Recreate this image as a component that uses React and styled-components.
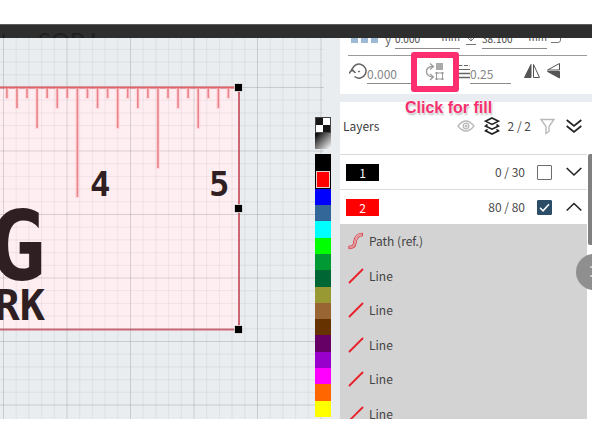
import React, { useState } from 'react'
import styled, { createGlobalStyle, css } from 'styled-components'

const GlobalStyle = createGlobalStyle`
  * {
    box-sizing: border-box;
  }

  body {
    background: #fff;
    color: #3c3c3c;
    font-family: 'Noto Sans CJK SC', 'Open Sans', sans-serif;
    font-size: 12px;
    line-height: 16px;
    margin: 0;
  }
`

const Page = styled.div`
  display: flex;
  flex-direction: column;
  height: 100vh;
  overflow: hidden;
  padding: 24px 0;
`

const TitleBar = styled.header`
  background: #2e2e2e;
  border-top: 1px solid #5c5f5e;
  flex: none;
  height: 14px;
  overflow: hidden;
  padding-top: 4px;
`

const Title = styled.h1`
  color: #1f1f1f;
  font-family: Lato, sans-serif;
  font-size: 24px;
  font-weight: 400;
  line-height: 24px;
  margin: 0;
`

const Workspace = styled.main`
  background: #e9edf0;
  display: grid;
  flex: 1;
  grid-template-columns: 1fr 16px 252px;
  margin-bottom: 1px;
  min-height: 0;
`

const Canvas = styled.div`
  min-width: 0;
  overflow: hidden;

  svg {
    display: block;
    height: 100%;
    width: 100%;
  }
`

const PaletteColumn = styled.div`
  display: flex;
  flex-direction: column;
  margin-right: 9px;
  margin-left: -9px;
  padding-top: 79px;
`

const Pattern = styled.button`
  background: ${p =>
    p.$checker
      ? 'conic-gradient(#fff 25%, #161616 0 50%, #fff 0 75%, #161616 0)'
      : 'linear-gradient(135deg, #111 10%, #fff)'};
  border: ${p => (p.$checker ? '1px solid #444' : 'none')};
  flex: none;
  height: 16px;
  padding: 0;
  width: 16px;
`

const Palette = styled.div`
  display: flex;
  flex: none;
  flex-direction: column;
  height: 263px;
  margin-top: 5px;
`

const Color = styled.button`
  background: ${p => p.$color};
  border: none;
  flex: 1;
  padding: 0;
  width: 16px;

  ${p =>
    p.$selected &&
    css`
      border: 1px solid #000;
      box-shadow: inset 0 0 0 1px #e8d0c8;
    `}
`

const Panel = styled.aside`
  background: #e9ecf0;
  display: flex;
  flex-direction: column;
  gap: 8px;
  min-height: 0;
  position: relative;
`

const Properties = styled.section`
  background: #fff;
  flex: none;
  padding-bottom: 10px;
`

const PositionRow = styled.div`
  align-items: flex-end;
  display: flex;
  height: 11px;
  overflow: hidden;
  padding-left: 11px;
`

const Anchors = styled.div`
  align-self: flex-start;
  display: flex;
  gap: 3px;
  margin-right: 7px;

  i {
    background: #9db9d3;
    height: 5px;
    width: 7px;
  }
`

const Measure = styled.label`
  align-items: flex-end;
  color: #6a6a6a;
  display: flex;
  height: 20px;
  margin-right: ${p => p.$after || 0}px;

  > svg {
    align-self: center;
    margin-right: 6px;
  }
`

const AxisName = styled.span`
  line-height: 20px;
  width: 10px;
`

const Field = styled.span`
  border-bottom: 1px solid #8b8b8b;
  display: flex;
  height: 20px;
  width: ${p => p.$width}px;
`

const Value = styled.input`
  background: none;
  border: none;
  color: ${p => (p.$dark ? '#4c4c4c' : '#858585')};
  flex: 1;
  font: inherit;
  font-size: ${p => (p.$dark ? 10 : 12)}px;
  line-height: 16px;
  min-width: 0;
  outline: none;
  padding: 0;
`

const Unit = styled.span`
  color: #4c4c4c;
  font-size: 10px;
  line-height: 16px;
`

const TransformRow = styled.div`
  align-items: flex-end;
  border-top: 1px solid #9a9a9a;
  display: flex;
  height: 29px;
  margin: 6px 5px 0 8px;
  padding-left: 1px;
`

const ToolIcon = styled.span`
  display: flex;
  height: 22px;
`

const ToolButton = styled.button`
  background: none;
  border: none;
  display: flex;
  height: 22px;
  margin-left: ${p => p.$before || 0}px;
  padding: 0;
`

const Callout = styled.div`
  display: flex;
  margin: 0 8px 0 13px;
  position: relative;

  &::after {
    border: 6px solid #fb2f70;
    border-radius: 3px;
    content: '';
    inset: -10px -14px -8px;
    pointer-events: none;
    position: absolute;
    z-index: 1;
  }
`

const CalloutLabel = styled.span`
  color: #f4306f;
  font-family: 'Liberation Sans', Arial, sans-serif;
  font-size: 16px;
  font-weight: 700;
  left: -20px;
  line-height: 18px;
  position: absolute;
  text-shadow: 0 0 2px #fff, 1px 2px 2px #b9b9b9;
  top: 37px;
  white-space: nowrap;
  z-index: 1;
`

const Layers = styled.section`
  background: #fff;
  display: flex;
  flex: 1;
  flex-direction: column;
  min-height: 0;
  overflow: hidden;
  padding-right: 5px;
`

const LayersHeader = styled.header`
  align-items: center;
  border-bottom: 1px solid #d9d9d9;
  display: flex;
  flex: none;
  height: 53px;
  padding: 0 5px 4px 3px;
`

const Heading = styled.h2`
  flex: 1;
  font-size: 12px;
  font-weight: 400;
  margin: 0;
`

const IconButton = styled.button`
  align-items: center;
  background: none;
  border: none;
  color: ${p => (p.$muted ? '#b9b9b9' : '#222')};
  display: flex;
  margin-left: ${p => p.$before || 0}px;
  padding: 0;
`

const Count = styled.span`
  color: #4a4a4a;
  margin-left: 8px;
`

const LayerRow = styled.div`
  align-items: center;
  border-bottom: ${p => (p.$open ? 'none' : '1px solid #dcdcdc')};
  display: flex;
  flex: none;
  height: ${p => (p.$open ? 34 : 35)}px;
  padding: 0 5px 0 6px;
`

const LayerName = styled.span`
  background: ${p => p.$color};
  color: #fff;
  height: 17px;
  line-height: 17px;
  margin-right: auto;
  text-align: center;
  width: 33px;
`

const Visible = styled.input`
  appearance: none;
  background: #fff;
  border: 1px solid #6c6c6c;
  border-radius: 1px;
  height: 15px;
  margin: 0 0 0 12px;
  width: 15px;

  &:checked {
    background: #2b4d68
      url("data:image/svg+xml,%3Csvg xmlns='http://www.w3.org/2000/svg' viewBox='0 0 13 13'%3E%3Cpath d='M2 6.8 5 9.8 11 3.2' fill='none' stroke='white' stroke-width='1.5'/%3E%3C/svg%3E");
    border-color: #2b4d68;
  }
`

const ItemList = styled.ul`
  background: #d3d3d3;
  color: #444;
  display: grid;
  flex: none;
  grid-template-rows: repeat(6, 1fr);
  height: 207px;
  list-style: none;
  margin: 0;
  padding: 0 0 0 8px;
`

const Item = styled.li`
  align-items: center;
  display: flex;
  gap: 5px;
`

const ScrollThumb = styled.div`
  background: #808080;
  border-radius: 2px 0 0 2px;
  height: 91px;
  position: absolute;
  right: 0;
  top: 116px;
  width: 4px;
`

const NextButton = styled.button`
  background: #8f8f8f;
  border: none;
  border-radius: 50%;
  color: #ddd;
  display: flex;
  height: 36px;
  padding: 11px 0 0 14px;
  position: absolute;
  right: -20px;
  top: 216px;
  width: 36px;
`

const colors = [
  '#000000',
  '#ff0000',
  '#0000ff',
  '#336699',
  '#00ffff',
  '#00ff00',
  '#009933',
  '#006633',
  '#999933',
  '#996633',
  '#663300',
  '#660066',
  '#9900cc',
  '#ff00ff',
  '#ff6600',
  '#ffff00',
]

const items = ['Path (ref.)', 'Line', 'Line', 'Line', 'Line', 'Line']

const range = n => Array.from({ length: n }, (_, i) => i)

const gridStroke = major => (major ? '#5c6670' : '#8090a0')
const gridOpacity = major => (major ? 0.24 : 0.13)

// sixteenths of an inch, counted from the right edge of the ruler
const tickLength = i => {
  if (i % 16 === 0) return 80
  if (i % 16 === 8) return 80
  if (i % 4 === 0) return 40
  return i % 2 === 0 ? 20 : 10
}

const Artboard = () => (
  <svg aria-label="Ruler drawing" role="img">
    <rect
      fill="#ffeef1"
      height="242"
      stroke="#cc6672"
      strokeWidth="2"
      width="258"
      x="-19"
      y="49.5"
    />
    {range(27).map(i => (
      <line
        key={`v${i}`}
        stroke={gridStroke(i % 5 === 0)}
        strokeOpacity={gridOpacity(i % 5 === 0)}
        x1={3.5 + i * 12.7}
        x2={3.5 + i * 12.7}
        y1="0"
        y2="382"
      />
    ))}
    {range(30).map(i => (
      <line
        key={`h${i}`}
        stroke={gridStroke(i % 5 === 4)}
        strokeOpacity={gridOpacity(i % 5 === 4)}
        x1="0"
        x2="332"
        y1={i * 12.7 - 1.3}
        y2={i * 12.7 - 1.3}
      />
    ))}
    <line stroke="#e0626a" strokeWidth="1.5" x2="238" y1="49.5" y2="49.5" />
    {range(23).map(i => {
      const x = 228.43 - i * 10.07
      // the whole-inch mark runs longer than the half-inch one
      const length = i === 15 ? 109 : tickLength(i + 1)
      return (
        <g key={i}>
          <line
            stroke="#ffc9cd"
            strokeOpacity="0.6"
            strokeWidth="4"
            x1={x}
            x2={x}
            y1="50"
            y2={51 + length}
          />
          <line
            stroke="#e9838b"
            strokeWidth="1.6"
            x1={x}
            x2={x}
            y1="50"
            y2={50 + length}
          />
        </g>
      )
    })}
    <g
      fill="#2f1f23"
      fontFamily="'DejaVu Sans Mono', monospace"
      fontWeight="700"
    >
      <text fontSize="34" x="90" y="158">
        4
      </text>
      <text fontSize="34" x="209" y="158">
        5
      </text>
      <text fontSize="96" textAnchor="end" x="46" y="242">
        G
      </text>
      <text fontSize="42" textAnchor="end" x="45" y="282">
        ORK
      </text>
    </g>
    <g stroke="#fff" strokeOpacity="0.7">
      <rect height="8" width="8" x="234.5" y="45.5" />
      <rect height="8" width="8" x="234.5" y="166.5" />
      <rect height="8" width="8" x="234.5" y="287.5" />
    </g>
  </svg>
)

const HeightIcon = () => (
  <svg fill="none" height="14" stroke="#777" viewBox="0 0 10 14" width="10">
    <path d="M5 0v9M2 6l3 3 3-3M0 12.500h10" />
  </svg>
)

const LockIcon = () => (
  <svg fill="none" height="11" stroke="#777" viewBox="0 0 10 11" width="10">
    <path d="M0 4.500h7q2.500 0 2.500-2.500v-2" />
  </svg>
)

const RotateIcon = () => (
  <svg fill="none" height="19" stroke="#626262" viewBox="0 0 18 19" width="18">
    <path d="M3 9.500a7 7 0 1 1 2.500 5" strokeWidth="1.500" />
    <path d="M0 11.500 3 7.500l3.500 3.500" strokeWidth="1.500" />
    <circle cx="10" cy="9.500" fill="#626262" r="0.600" />
  </svg>
)

const FillIcon = () => (
  <svg fill="none" height="19" stroke="#999" viewBox="0 0 20 19" width="20">
    <path d="M8 4.500H6.500Q1.500 5.500 1.500 9.500t5 5.500H8" strokeWidth="1.300" />
    <path d="M5 1.500 8.500 4.500 5 7.500M5 12l3.500 3L5 18" strokeWidth="1.200" />
    <rect fill="#aaa" height="7" stroke="none" width="7" x="11" y="1" />
    <rect height="6" width="6" x="11.500" y="11" />
    <path d="M10.500 11h2M16.500 11h2M10.500 17h2M16.500 17h2" strokeWidth="2" />
  </svg>
)

const StrokeIcon = () => (
  <svg fill="none" height="19" stroke="#666" viewBox="0 0 17 19" width="17">
    <path d="M0 3.500h17" strokeDasharray="4 1.500" />
    <path d="M0 7.500h17" />
    <path d="M0 11.500h17M0 15.500h17" strokeWidth="1.500" />
  </svg>
)

const MirrorIcon = () => (
  <svg height="18" stroke="#555" viewBox="0 0 16 18" width="16">
    <path d="M7 2.500v13H.5z" fill="#555" />
    <path d="M9.500 2.500v13H15.500z" fill="none" />
  </svg>
)

const FlipIcon = () => (
  <svg height="18" stroke="#555" viewBox="0 0 13 18" width="13">
    <path d="M12.500 1.500v6.500H.5z" fill="none" />
    <path d="M12.500 9.500v6.500L.5 9.500z" fill="#555" />
  </svg>
)

const EyeIcon = () => (
  <svg fill="none" height="12" stroke="currentColor" viewBox="0 0 18 12" width="18">
    <path d="M1 6q8-10 16 0-8 10-16 0z" strokeWidth="1.300" />
    <circle cx="9" cy="6" r="2.800" strokeWidth="1.300" />
    <circle cx="9" cy="6" fill="currentColor" r="1" />
  </svg>
)

const StackIcon = () => (
  <svg fill="none" height="18" stroke="currentColor" viewBox="0 0 16 18" width="16">
    <path
      d="M8 1 14.500 4.200 8 7.400 1.500 4.200zM3.500 7.500 1.500 9l6.500 3.200L14.500 9l-2-1.500M3.500 12.300l-2 1.500L8 17l6.500-3.200-2-1.500"
      strokeWidth="1.600"
    />
  </svg>
)

const FunnelIcon = () => (
  <svg fill="none" height="17" stroke="currentColor" viewBox="0 0 15 17" width="15">
    <path d="M1 1.500h13L9 8.500v5l-3 2v-7z" strokeWidth="1.400" />
  </svg>
)

const DoubleChevronIcon = () => (
  <svg fill="none" height="15" stroke="currentColor" viewBox="0 0 16 15" width="16">
    <path d="m.7 1 7.300 6 7.300-6M.7 7 8 13l7.300-6" strokeWidth="1.700" />
  </svg>
)

const ChevronIcon = ({ up }) => (
  <svg fill="none" height="10" stroke="currentColor" viewBox="0 0 16 10" width="16">
    <path d={up ? 'm.7 8.500 7.300-7 7.300 7' : 'm.7 1 7.300 7 7.300-7'} strokeWidth="1.600" />
  </svg>
)

const PathIcon = () => (
  <svg fill="none" height="18" viewBox="0 0 16 18" width="16">
    <path d="M.5 15.500c4.500 0 6-1 6.500-5.500S9.500 2.500 15 2.500" stroke="#dc3c46" strokeWidth="3.600" />
    <path d="M1.300 15.500c3.700 0 5.200-1 5.700-5.500S9.500 2.500 14.200 2.500" stroke="#e3c4c6" strokeWidth="2" />
    <path d="M.5 15.500c4.500 0 6-1 6.500-5.500S9.500 2.500 15 2.500" stroke="#dc5a62" strokeWidth="0.600" />
  </svg>
)

const LineIcon = () => (
  <svg fill="none" height="16" viewBox="0 0 16 16" width="16">
    <path d="M1.500 14.500 14.500 1.500" stroke="#e8202a" strokeLinecap="round" strokeWidth="1.800" />
  </svg>
)

const Layer = ({ name, color, count, checked, open }) => {
  const [visible, setVisible] = useState(checked)
  return (
    <LayerRow $open={open}>
      <LayerName $color={color}>{name}</LayerName>
      <Count>{count}</Count>
      <Visible
        aria-label={`Layer ${name}`}
        checked={visible}
        onChange={e => setVisible(e.target.checked)}
        type="checkbox"
      />
      <IconButton $before={14} aria-expanded={open} aria-label={`Expand layer ${name}`}>
        <ChevronIcon up={open} />
      </IconButton>
    </LayerRow>
  )
}

const App = () => {
  const [selected, setSelected] = useState('#ff0000')

  return (
    <Page>
      <GlobalStyle />
      <TitleBar>
        <Title>tes SOP Images</Title>
      </TitleBar>
      <Workspace>
        <Canvas>
          <Artboard />
        </Canvas>
        <PaletteColumn>
          <Pattern $checker aria-label="Pattern fill" />
          <Pattern aria-label="Gradient fill" />
          <Palette>
            {colors.map(color => (
              <Color
                $color={color}
                $selected={color === selected}
                aria-label={color}
                key={color}
                onClick={() => setSelected(color)}
              />
            ))}
          </Palette>
        </PaletteColumn>
        <Panel>
          <Properties>
            <PositionRow>
              <Anchors>
                <i />
                <i />
                <i />
              </Anchors>
              <Measure $after={6}>
                <AxisName>y</AxisName>
                <Field $width={65}>
                  <Value $dark defaultValue="0.000" />
                  <Unit>mm</Unit>
                </Field>
              </Measure>
              <Measure $after={4}>
                <HeightIcon />
                <Field $width={65}>
                  <Value $dark aria-label="Height" defaultValue="38.100" />
                  <Unit>mm</Unit>
                </Field>
              </Measure>
              <LockIcon />
            </PositionRow>
            <TransformRow>
              <ToolIcon>
                <RotateIcon />
              </ToolIcon>
              <Field $width={45}>
                <Value aria-label="Rotation" defaultValue="0.000" />
              </Field>
              <Callout>
                <ToolButton aria-label="Fill">
                  <FillIcon />
                </ToolButton>
                <CalloutLabel>Click for fill</CalloutLabel>
              </Callout>
              <ToolIcon>
                <StrokeIcon />
              </ToolIcon>
              <Field $width={41}>
                <Value aria-label="Stroke width" defaultValue="0.25" />
              </Field>
              <ToolButton $before={13} aria-label="Mirror horizontally">
                <MirrorIcon />
              </ToolButton>
              <ToolButton $before={7} aria-label="Mirror vertically">
                <FlipIcon />
              </ToolButton>
            </TransformRow>
          </Properties>
          <Layers>
            <LayersHeader>
              <Heading>Layers</Heading>
              <IconButton $muted aria-label="Toggle visibility">
                <EyeIcon />
              </IconButton>
              <IconButton $before={9} aria-label="All layers">
                <StackIcon />
              </IconButton>
              <Count>2 / 2</Count>
              <IconButton $before={9} $muted aria-label="Filter">
                <FunnelIcon />
              </IconButton>
              <IconButton $before={11} aria-label="Expand all">
                <DoubleChevronIcon />
              </IconButton>
            </LayersHeader>
            <Layer checked={false} color="#000" count="0 / 30" name="1" open={false} />
            <Layer checked color="#f00" count="80 / 80" name="2" open />
            <ItemList>
              {items.map((item, i) => (
                <Item key={i}>
                  {item === 'Line' ? <LineIcon /> : <PathIcon />}
                  {item}
                </Item>
              ))}
            </ItemList>
          </Layers>
          <ScrollThumb />
          <NextButton aria-label="Next">
            <svg fill="none" height="13" stroke="currentColor" viewBox="0 0 4 13" width="4">
              <path d="M0 2h2M0 11h2" strokeWidth="1.500" />
            </svg>
          </NextButton>
        </Panel>
      </Workspace>
    </Page>
  )
}

export default App
